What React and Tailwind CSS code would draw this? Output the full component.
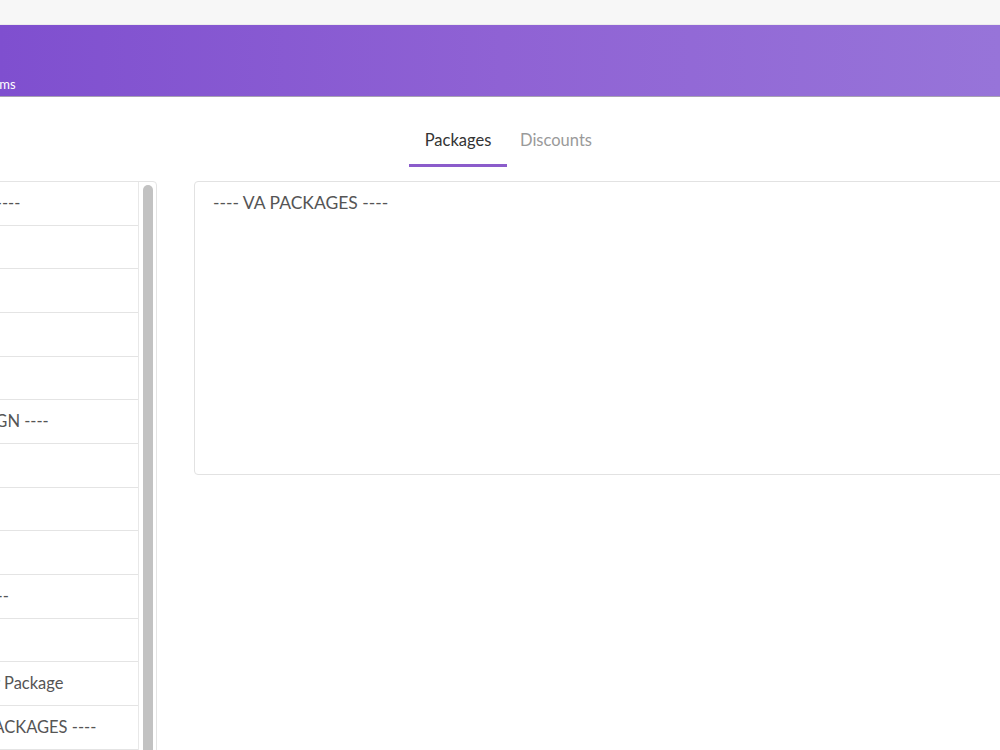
import React from 'react';

const rows = [
  '---- VA PACKAGES ----',
  'Basic VA Package',
  'Standard VA',
  'Premium VA',
  'VA Add-ons',
  '---- GRAPHIC DESIGN ----',
  'Logo Design',
  'Brand Kit',
  'Flyers',
  '---- SEO OFFERS ----',
  'SEO Audit',
  'Social Media Starter Package',
  '---- MARKETING PACKAGES ----',
  'Email Campaign',
];

const App = () => {
  return (
    <div className="w-[1000px] h-[750px] overflow-hidden bg-white font-['Lato',sans-serif]">
      <div className="h-[25px] bg-[#f7f7f7] border-b border-[#ececec]" />
      <div className="h-[72px] bg-gradient-to-r from-[#7f4fcf] via-[#8f62d4] to-[#9774d9] border-b border-[#a7a1b3] flex items-end pb-[2px]">
        <span className="ml-[-38px] text-[13px] text-white">Programs</span>
      </div>

      <div className="flex pl-[409px] h-[70px] items-end">
        <div className="w-[98px] h-full flex items-center justify-center border-b-[3px] border-[#8b5ccb] pt-[19px]">
          <span className="text-[16.5px] text-[#333]">Packages</span>
        </div>
        <div className="w-[98px] h-full flex items-center justify-center border-b-[3px] border-transparent pt-[19px]">
          <span className="text-[16.5px] text-[#9a9a9a]">Discounts</span>
        </div>
      </div>

      <div className="flex gap-[37px] mt-[14px]">
        <div className="ml-[-200px] w-[357px] h-[600px] border border-[#e4e4e4] rounded-[4px] flex shrink-0">
          <div className="flex-1 flex flex-col border-r border-[#e8e8e8]">
            {rows.map((r, i) => (
              <div key={i} className="h-[43.67px] shrink-0 border-b border-[#e4e4e4] flex items-center pl-[54px]">
                <span className="text-[16.5px] text-[#555] whitespace-nowrap">{r}</span>
              </div>
            ))}
          </div>
          <div className="w-[17px] pt-[3px] flex justify-center">
            <div className="w-[10px] h-full bg-[#c2c2c2] rounded-full" />
          </div>
        </div>
        <div className="w-[900px] h-[294px] border border-[#e2e2e2] rounded-[4px] px-[18px] pt-[8px] shrink-0">
          <span className="text-[17.5px] text-[#555]">---- VA PACKAGES ----</span>
        </div>
      </div>
    </div>
  );
};

export default App;
